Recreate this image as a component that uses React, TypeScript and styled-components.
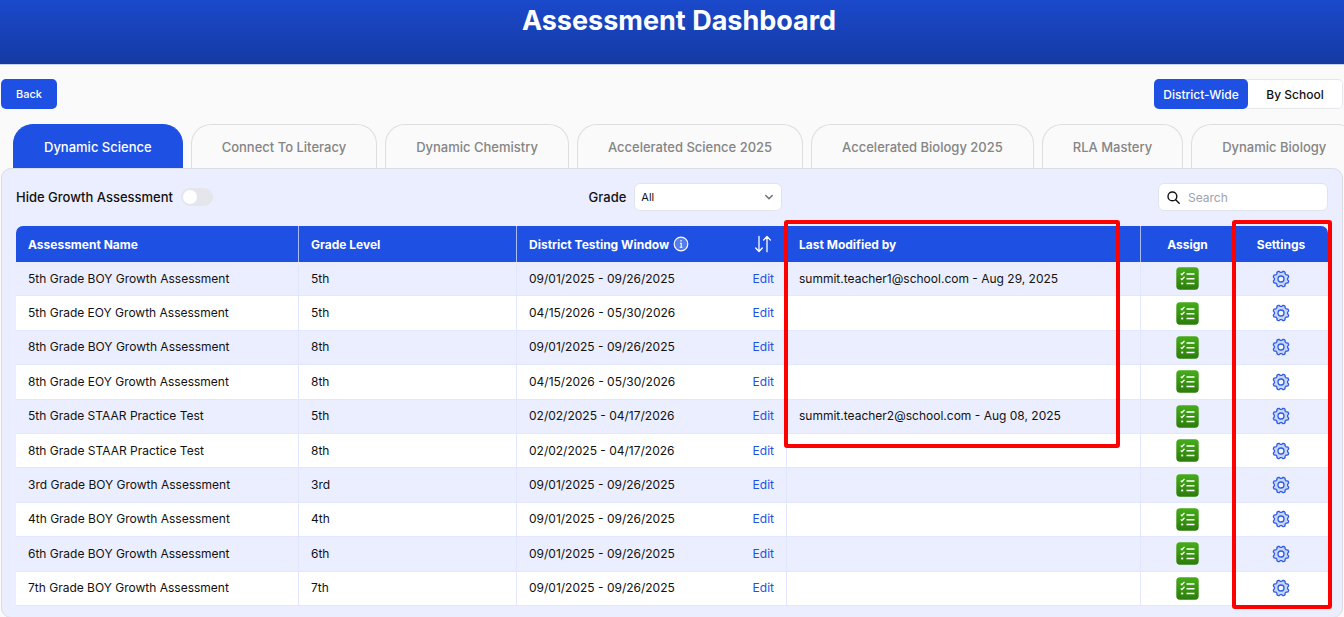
import React from "react";
import styled, { createGlobalStyle, css } from "styled-components";

const GlobalStyle = createGlobalStyle`
  *, *::before, *::after { box-sizing: border-box; }
  body {
    margin: 0;
    background: #fafafa;
    color: #111;
    font-family: Inter, "Liberation Sans", sans-serif;
    overflow-x: hidden;
  }
  button, input, select { font-family: inherit; }
`;

const Banner = styled.header`
  height: 65px;
  padding: 4px 0 0 14px;
  border-bottom: 1px solid #c5d0ef;
  background: linear-gradient(#1a49cb, #153aa3);
  text-align: center;
`;

const Title = styled.h1`
  margin: 0;
  color: #fff;
  font-size: 27px;
  line-height: 34px;
  font-weight: 700;
`;

const ActionBar = styled.div`
  display: flex;
  justify-content: space-between;
  padding: 14px 1px 15px;
`;

const BackButton = styled.button`
  height: 30px;
  padding: 0 15px;
  border: 0;
  border-radius: 5px;
  background: #1d50e3;
  color: #fff;
  font-size: 11px;
  font-weight: 500;
`;

const Segments = styled.div`
  display: flex;
  height: 30px;
  border: 1px solid #e5e7eb;
  border-width: 1px 1px 1px 0;
  border-radius: 5px;
  background: #fff;
`;

const Segment = styled.button<{ $active?: boolean }>`
  width: 94px;
  margin: -1px 0;
  padding: 0;
  border: 0;
  border-radius: 5px;
  font-size: 12px;
  font-weight: 500;
  background: ${(p) => (p.$active ? "#1d50e3" : "transparent")};
  color: ${(p) => (p.$active ? "#fff" : "#111")};
`;

const Tabs = styled.nav`
  display: flex;
  gap: 8px;
  padding-left: 13px;
  overflow: hidden;
`;

const Tab = styled.button<{ $active?: boolean }>`
  flex: none;
  height: 44px;
  padding: 0 30px;
  border: 1px solid #dedede;
  border-bottom: 0;
  border-radius: 20px 20px 0 0;
  background: #fafafa;
  color: #858585;
  font-size: 13px;
  font-weight: 500;
  ${(p) =>
    p.$active &&
    css`
      border-color: #1d50e3;
      background: #1d50e3;
      color: #fff;
    `}
`;

const Panel = styled.main`
  margin: 0 1px;
  padding: 14px 14px 11px;
  border: 1px solid #dcdde3;
  border-radius: 10px;
  background: #ebeefe;
`;

const Filters = styled.div`
  display: flex;
  justify-content: space-between;
  align-items: center;
  height: 28px;
  margin-bottom: 15px;
`;

const FieldLabel = styled.label`
  display: flex;
  align-items: center;
  gap: 8px;
  font-size: 13px;
  font-weight: 500;
`;

const Switch = styled.input`
  appearance: none;
  width: 32px;
  height: 18px;
  margin: 0;
  padding: 2px;
  border-radius: 9px;
  background: #e5e6eb;
  &::before {
    content: "";
    display: block;
    width: 14px;
    height: 14px;
    border-radius: 50%;
    background: #fff;
  }
  &:checked { background: #1d50e3; }
  &:checked::before { margin-left: 14px; }
`;

const SelectBox = styled.span`
  display: grid;
  align-items: center;
  > * { grid-area: 1 / 1; }
  > svg { justify-self: end; margin-right: 8px; pointer-events: none; }
`;

const Select = styled.select`
  appearance: none;
  width: 148px;
  height: 28px;
  padding: 0 6px;
  border: 1px solid #e2e4ec;
  border-radius: 6px;
  background: #fff;
  color: #111;
  font-size: 11px;
`;

const SearchBox = styled.label`
  display: flex;
  align-items: center;
  gap: 8px;
  width: 170px;
  height: 28px;
  padding: 0 8px;
  border: 1px solid #e2e4ec;
  border-radius: 6px;
  background: #fff;
`;

const SearchInput = styled.input`
  min-width: 0;
  flex: 1;
  padding: 0;
  border: 0;
  outline: 0;
  background: none;
  font-size: 12px;
  &::placeholder { color: #9ca3af; }
`;

const TableArea = styled.div`
  position: relative;
`;

const Table = styled.table`
  width: 100%;
  height: 380px;
  table-layout: fixed;
  border-collapse: separate;
  border-spacing: 0;
`;

const Column = styled.col<{ $width?: number }>`
  ${(p) => p.$width && `width: ${p.$width}px;`}
`;

const HeadCell = styled.th<{ $center?: boolean; $line?: boolean }>`
  height: 36px;
  padding: 0 12px;
  background: #1d50e3;
  border-right: ${(p) => (p.$line ? "1px solid #a9bcf5" : "0")};
  color: #fff;
  font-size: 12px;
  font-weight: 700;
  text-align: ${(p) => (p.$center ? "center" : "left")};
  &:first-child { border-top-left-radius: 7px; }
  &:last-child { border-top-right-radius: 7px; }
`;

const Row = styled.tr`
  background: #ebeefe;
  &:nth-child(even) { background: #fff; }
`;

const Cell = styled.td<{ $center?: boolean; $line?: boolean }>`
  padding: 0 12px;
  border-bottom: 1px solid #e0e7fe;
  border-right: ${(p) => (p.$line ? "1px solid #e0e7fe" : "0")};
  font-size: 12px;
  line-height: 16px;
  white-space: nowrap;
  text-align: ${(p) => (p.$center ? "center" : "left")};
`;

const Split = styled.div`
  display: flex;
  align-items: center;
  justify-content: space-between;
`;

const WithIcon = styled.span`
  display: flex;
  align-items: center;
  gap: 4px;
`;

const EditLink = styled.a`
  color: #1d50e3;
  text-decoration: none;
`;

const IconButton = styled.button`
  display: inline-flex;
  padding: 0;
  border: 0;
  background: none;
  vertical-align: middle;
`;

const SortButton = styled(IconButton)`
  padding-right: 2px;
`;

const Highlight = styled.div`
  position: absolute;
  top: -6px;
  border: 4px solid #fe0000;
  border-radius: 3px;
  pointer-events: none;
`;

const ModifiedHighlight = styled(Highlight)`
  left: 768px;
  right: 208px;
  height: 228px;
`;

const SettingsHighlight = styled(Highlight)`
  right: -4px;
  bottom: -3px;
  width: 100px;
`;

const InfoIcon = () => (
  <svg width="16" height="16" viewBox="0 0 16 16" fill="none" stroke="#fff">
    <circle cx="8" cy="8" r="6.8" fill="#fff" fillOpacity=".25" strokeWidth="1.2" />
    <path d="M7 7.2h1.2v4M6.8 11.3h2.7" strokeWidth="1.1" />
    <circle cx="8" cy="4.8" r=".8" fill="#fff" stroke="none" />
  </svg>
);

const SortIcon = () => (
  <svg width="18" height="18" viewBox="0 0 18 18" fill="none" stroke="#fff" strokeWidth="1.3" strokeLinecap="round" strokeLinejoin="round">
    <path d="M5 1.3v15M1.7 13 5 16.5 8.3 13M13 16.7v-15M9.7 5 13 1.5 16.3 5" />
  </svg>
);

const ChevronIcon = () => (
  <svg width="10" height="10" viewBox="0 0 10 10" fill="none" stroke="#6b7280" strokeWidth="1.5" strokeLinecap="round" strokeLinejoin="round">
    <path d="M1.8 3.5 5 6.7l3.2-3.2" />
  </svg>
);

const SearchIcon = () => (
  <svg width="13" height="13" viewBox="0 0 13 13" fill="none" stroke="#111" strokeWidth="1.4" strokeLinecap="round">
    <circle cx="5.4" cy="5.4" r="4.4" />
    <path d="m8.7 8.7 3.5 3.5" />
  </svg>
);

const AssignIcon = () => (
  <svg width="23" height="23" viewBox="0 0 23 23" fill="none" stroke="#fff">
    <defs>
      <linearGradient id="leaf" x1="0" y1="0" x2="0" y2="1">
        <stop offset="0" stopColor="#46ac1a" />
        <stop offset="1" stopColor="#2b7d09" />
      </linearGradient>
    </defs>
    <rect x=".3" y=".3" width="22.4" height="22.4" rx="3.6" fill="url(#leaf)" stroke="none" />
    <path d="M10.5 7h8M10.5 11.8h8M10.5 16.5h8" strokeWidth="1.6" />
    <path d="m4.7 6.6 1.2 1.2 2.6-2.9M4.7 11.4l1.2 1.2 2.6-2.9" strokeWidth="1.3" />
    <path d="M5.2 16.5h2" strokeWidth="1.8" />
  </svg>
);

const GEAR_TEETH = 8;
const gearPath =
  Array.from({ length: 96 }, (_, i) => {
    const angle = (i / 96) * Math.PI * 2;
    const wave = -Math.cos(angle * GEAR_TEETH);
    const radius = 7.3 + Math.tanh(wave * 2.2) * 0.75;
    const x = 9 + radius * Math.sin(angle);
    const y = 9 - radius * Math.cos(angle);
    return `${i ? "L" : "M"}${x.toFixed(2)} ${y.toFixed(2)}`;
  }).join("") + "Z";

const GearIcon = () => (
  <svg width="18" height="18" viewBox="0 0 18 18" stroke="#2c5be5" strokeWidth="1.3" strokeLinejoin="round">
    <path d={gearPath} fill="#cbd7fa" />
    <circle cx="9" cy="9" r="3" fill="#f4f6ff" />
  </svg>
);

const tabs = [
  "Dynamic Science",
  "Connect To Literacy",
  "Dynamic Chemistry",
  "Accelerated Science 2025",
  "Accelerated Biology 2025",
  "RLA Mastery",
  "Dynamic Biology",
];

const FALL = "09/01/2025 - 09/26/2025";
const SPRING = "04/15/2026 - 05/30/2026";

const rows = [
  { name: "5th Grade BOY Growth Assessment", grade: "5th", dates: FALL, by: "summit.teacher1@school.com - Aug 29, 2025" },
  { name: "5th Grade EOY Growth Assessment", grade: "5th", dates: SPRING, by: "" },
  { name: "8th Grade BOY Growth Assessment", grade: "8th", dates: FALL, by: "" },
  { name: "8th Grade EOY Growth Assessment", grade: "8th", dates: SPRING, by: "" },
  { name: "5th Grade STAAR Practice Test", grade: "5th", dates: "02/02/2025 - 04/17/2026", by: "summit.teacher2@school.com - Aug 08, 2025" },
  { name: "8th Grade STAAR Practice Test", grade: "8th", dates: "02/02/2025 - 04/17/2026", by: "" },
  { name: "3rd Grade BOY Growth Assessment", grade: "3rd", dates: FALL, by: "" },
  { name: "4th Grade BOY Growth Assessment", grade: "4th", dates: FALL, by: "" },
  { name: "6th Grade BOY Growth Assessment", grade: "6th", dates: FALL, by: "" },
  { name: "7th Grade BOY Growth Assessment", grade: "7th", dates: FALL, by: "" },
];

export default function App() {
  return (
    <>
      <GlobalStyle />
      <Banner>
        <Title>Assessment Dashboard</Title>
      </Banner>
      <ActionBar>
        <BackButton>Back</BackButton>
        <Segments>
          <Segment $active>District-Wide</Segment>
          <Segment>By School</Segment>
        </Segments>
      </ActionBar>
      <Tabs>
        {tabs.map((label, i) => (
          <Tab key={label} $active={i === 0}>{label}</Tab>
        ))}
      </Tabs>
      <Panel>
        <Filters>
          <FieldLabel>
            Hide Growth Assessment
            <Switch type="checkbox" role="switch" />
          </FieldLabel>
          <FieldLabel>
            Grade
            <SelectBox>
              <Select defaultValue="All">
                <option>All</option>
              </Select>
              <ChevronIcon />
            </SelectBox>
          </FieldLabel>
          <SearchBox>
            <SearchIcon />
            <SearchInput type="text" placeholder="Search" aria-label="Search" />
          </SearchBox>
        </Filters>
        <TableArea>
          <Table>
            <colgroup>
              <Column $width={283} />
              <Column $width={218} />
              <Column $width={270} />
              <Column />
              <Column $width={93} />
              <Column $width={94} />
            </colgroup>
            <thead>
              <tr>
                <HeadCell $line>Assessment Name</HeadCell>
                <HeadCell $line>Grade Level</HeadCell>
                <HeadCell $line>
                  <Split>
                    <WithIcon>
                      District Testing Window
                      <InfoIcon />
                    </WithIcon>
                    <SortButton aria-label="Sort">
                      <SortIcon />
                    </SortButton>
                  </Split>
                </HeadCell>
                <HeadCell $line>Last Modified by</HeadCell>
                <HeadCell $center>Assign</HeadCell>
                <HeadCell $center>Settings</HeadCell>
              </tr>
            </thead>
            <tbody>
              {rows.map((row) => (
                <Row key={row.name}>
                  <Cell $line>{row.name}</Cell>
                  <Cell $line>{row.grade}</Cell>
                  <Cell $line>
                    <Split>
                      {row.dates}
                      <EditLink href="#edit">Edit</EditLink>
                    </Split>
                  </Cell>
                  <Cell $line>{row.by}</Cell>
                  <Cell $center>
                    <IconButton aria-label="Assign">
                      <AssignIcon />
                    </IconButton>
                  </Cell>
                  <Cell $center>
                    <IconButton aria-label="Settings">
                      <GearIcon />
                    </IconButton>
                  </Cell>
                </Row>
              ))}
            </tbody>
          </Table>
          <ModifiedHighlight />
          <SettingsHighlight />
        </TableArea>
      </Panel>
    </>
  );
}
